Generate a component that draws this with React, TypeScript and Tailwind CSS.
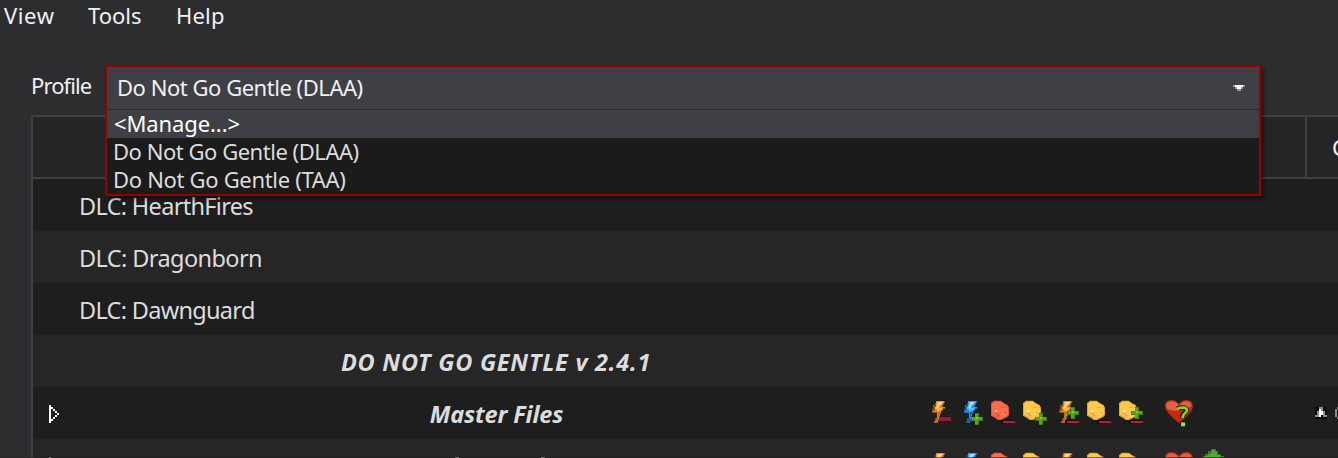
import type { ReactNode } from "react";

const Glyph = ({ w, x, children }: { w: string; x: number; children: ReactNode }) => (
  <svg className={`${w} h-7 shrink-0`} viewBox={`${x} 30 ${w === "w-8" ? 96 : w === "w-7" ? 84 : w === "w-9" ? 108 : 138} 84`}>
    {children}
  </svg>
);

const Bolt = ({ x, blue }: { x: number; blue?: boolean }) => (
  <g transform={`translate(${x} 0)`}>
    <path d="M12 33h27v6h-3v6h-3v6h6v6h-6v6h-6v9h-3v9h-3v12h-3v6H6v-6h3v-9h6V69H0V57h3V45h6V39h3z" fill={blue ? "#1668aa" : "#8b5215"} />
    <path d="M12 33h24v6h-3v6h-3v6h9v3h-6v6h-6v9h-3v9h-3v9h-3v9h-6v-6h3V66H3v-3h6V51h3z" fill={blue ? "#299ae4" : "#dd8d25"} />
    <path d="M15 36h15v6h-6v6h-3v6h9v6h-6v3h-9V57H9v-6h3z" fill={blue ? "#64c0f7" : "#fbb442"} />
    <path d="M21 36h12v3h-6v6h-6v9h-6v-6h3v-9h3z" fill={blue ? "#a9def9" : "#ffdc94"} />
    <path d="M18 66h6v6h-3v9h-3v12h-3v6H6v-6h6v-9h6z" fill={blue ? "#0d5ba0" : "#b86d14"} />
  </g>
);

const Blob = ({ x, red }: { x: number; red?: boolean }) => (
  <g transform={`translate(${x} 0)`}>
    <path d="M0 39L9 32h20l11 8 10 5 4 8v22l-5 6-11 5-8 4H20l-7-5-13-8z" fill={red ? "#e2573b" : "#e0a53e"} />
    <path d="M3 42l8-7h18l11 8 9 6 2 8v17l-11 8-10 4h-8l-7-7-12-5z" fill={red ? "#f96c4d" : "#fcc94d"} />
    <path d="M12 66l8 4 8 8-6 3-6-6-7-4zM30 51h12v3H30zM39 66h9v3h-9z" fill={red ? "#e0563f" : "#e8ac43"} />
    <path d="M12 60h6v6h-6z" fill={red ? "#ffc0a4" : "#ffe8ad"} />
    <path d="M33 69h6v6h-6z" fill={red ? "#f68b68" : "#ffdc73"} />
  </g>
);

const Plus = ({ x, y }: { x: number; y: number }) => (
  <g transform={`translate(${x} ${y})`}>
    <path d="M12 0h12v12h12v12H24v12H12V24H0V12h12z" fill="#397d14" />
    <path d="M12 3h9v9h12v9H21v12h-9V21H3v-9h9z" fill="#5ca41b" />
    <path d="M15 12h6v6h-6z" fill="#84c92c" />
  </g>
);

const Minus = ({ x, y = 93 }: { x: number; y?: number }) => (
  <g>
    <path d={`M${x - 6} ${y - 3}h42v12h-42z`} fill="#160b0d" />
    <path d={`M${x} ${y}h36v6h-36z`} fill="#bd193f" />
  </g>
);

const Heart = () => (
  <g>
    <path d="M387 100C374 88 346 68 345 49c0-13 8-19 19-19 11 0 19 5 23 12 4-7 12-12 22-12 12 0 20 6 20 18 0 21-28 38-42 52z" fill="#a52c1a" />
    <path d="M387 95C375 84 350 67 349 50c0-11 6-16 15-16 11 0 18 5 23 13 5-8 12-13 22-13 10 0 16 5 16 15 0 17-26 35-38 46z" fill="#cb2710" />
    <path d="M351 57c-7-14 0-23 13-23 11 0 18 5 23 13 5-8 12-13 22-13 10 0 16 5 16 15-14 6-24 12-40 13-13 1-23-1-34-5z" fill="#df6045" />
    <path d="M383 56c6-5 26-4 27 4 1 9-13 7-13 23M393 101h12" fill="none" stroke="#141d08" strokeWidth="15" />
    <path d="M382 57c6-6 29-6 29 3 0 11-13 7-13 24" fill="none" stroke="#8bd51b" strokeWidth="8" />
    <path d="M393 97h12v12h-12z" fill="#9bdd29" />
  </g>
);

const Flags = ({ arrow }: { arrow?: boolean }) => (
  <div className="flex shrink-0 pt-[13px]">
    <Glyph w="w-8" x={30}><Bolt x={36} /><path d="M57 81h36v12H57z" fill="#951b37" /></Glyph>
    <Glyph w="w-7" x={126}><Bolt x={132} blue /><Plus x={153} y={69} /></Glyph>
    <Glyph w="w-8" x={210}><Blob x={213} red /><Minus x={249} /></Glyph>
    <Glyph w="w-9" x={306}><Blob x={309} /><Plus x={345} y={69} /></Glyph>
    <Glyph w="w-7" x={24}><Bolt x={28} /><Plus x={51} y={51} /><Minus x={51} /></Glyph>
    <Glyph w="w-8" x={108}><Blob x={111} /><Minus x={147} /></Glyph>
    <Glyph w="w-[46px]" x={204}><Blob x={207} /><Plus x={243} y={51} /><Minus x={243} /></Glyph>
    <Glyph w="w-9" x={342}><Heart /></Glyph>
    {arrow && (
      <svg className="-mt-1 h-7 w-6" viewBox="0 0 72 84">
        <path d="M33 3h15v6h6v9h9v6h9v9H9v-9h6v-6h9V9h9z" fill="#397f20" />
        <path d="M36 6h9v6h6v9h9v9H15v-6h9v-6h9z" fill="#52a733" />
      </svg>
    )}
  </div>
);

const Expander = () => (
  <svg className="mt-px ml-4 h-[18px] w-[11px] shrink-0" viewBox="0 0 11 18" shapeRendering="crispEdges">
    <path d="M0 0h2v2h2v2h2v2h2v2h2v2H8v2H6v2H4v2H2v2H0zM2 4v10h2v-2h2v-2h2V8H6V6H4V4z" fill="#fff" fillRule="evenodd" />
  </svg>
);

const dlc = [
  ["DLC: HearthFires", "tracking-[-0.68px]"],
  ["DLC: Dragonborn", "tracking-[-0.6px]"],
  ["DLC: Dawnguard", "tracking-[-0.7px]"],
];

export default function App() {
  return (
    <div className="relative flex h-[458px] w-[1338px] flex-col overflow-hidden bg-[#2d2d30] font-['Noto_Sans','Open_Sans',sans-serif] text-[22px] text-[#f1f1f1]">
      <nav className="flex h-[66px] pl-1 leading-[30px]">
        <span className="w-[84px] tracking-[0.6px]">View</span>
        <span className="w-[88px]">Tools</span>
        <span className="tracking-[0.2px]">Help</span>
      </nav>
      <div className="flex h-[49px] pl-[31px]">
        <label className="w-[75px] pt-[3px] leading-8 tracking-[-0.9px]">Profile</label>
        <div className="relative z-10 -mt-px -ml-px h-[131px] w-[1156px] border-2 border-[#990000] bg-[#1b1b1c] shadow-[3px_3px_4px_rgba(0,0,0,0.45)]">
          <div className="flex h-[43px] items-center justify-between border-b border-[#2d2d30] bg-[#3f3f46] pr-[14px] pl-[10px]">
            <span className="-mt-0.5 tracking-[-0.47px]">Do Not Go Gentle (DLAA)</span>
            <svg className="h-1.5 w-3" viewBox="0 0 12 6"><path d="M0 0h12v2h-2v2H8v2H4V4H2V2H0z" fill="#999" /><path d="M2 0h8v2H8v2H4V2H2z" fill="#fff" /></svg>
          </div>
          <div className="h-7 bg-[#3f3f46] pl-[7px] leading-[26px] tracking-[-0.1px] text-white">&lt;Manage...&gt;</div>
          <div className="h-7 pl-1.5 leading-[26px] tracking-[-0.47px] text-[#dcdcdc]">Do Not Go Gentle (DLAA)</div>
          <div className="h-7 pl-1.5 leading-[26px] tracking-[-0.32px] text-[#dcdcdc]">Do Not Go Gentle (TAA)</div>
        </div>
      </div>
      <main className="ml-[31px] w-[1307px] border-t-2 border-l-2 border-[#3f3f46] text-[23.5px] text-[#dcdcdc]">
        <header className="flex h-[62px] overflow-hidden border-b-2 border-[#3f3f46] bg-[#252526]">
          <div className="w-[1274px] shrink-0 border-r-2 border-[#3f3f46]" />
          <div className="shrink-0 pl-[25px] text-[22px] leading-[60px] whitespace-nowrap text-[#f1f1f1]">C</div>
        </header>
        {dlc.map(([name, spacing], i) => (
          <div key={name} className={`h-[52px] pl-[46px] leading-[55px] ${spacing} ${i % 2 ? "bg-[#262626]" : "bg-[#1e1e1e]"}`}>{name}</div>
        ))}
        <div className="h-[52px] bg-[#262626] text-center leading-[54px] font-bold italic"><div className="w-[926px] tracking-[0.74px]">DO NOT GO GENTLE v 2.4.1</div></div>
        <div className="flex h-[52px] bg-[#1e1e1e]">
          <div className="flex w-[897px] shrink-0 items-center">
            <Expander />
            <span className="mt-1 w-[873px] shrink-0 text-center font-bold tracking-[-0.15px] italic">Master Files</span>
          </div>
          <Flags />
          <svg className="mt-5 ml-[115px] h-3 w-6 shrink-0" viewBox="0 0 24 12">
            <path d="M0 0h12v12H0z" fill="#090909" />
            <path d="M4 0h4v4h2v4h2v2H8V8H6v2H0V8h2V4h2z" fill="#909090" />
            <path d="M4 2h2v2h2v4H6v2H4z" fill="#fff" />
            <path d="M20 2h2v8h-2zM22 0h2v2h-2zM22 10h2v2h-2z" fill="#888" />
          </svg>
        </div>
        <div className="flex h-[19px] overflow-hidden bg-[#262626]">
          <div className="flex h-[52px] w-[897px] shrink-0 items-center">
            <Expander />
            <svg className="-mt-3.5 ml-[395px] h-px w-[90px] self-start translate-y-8" viewBox="0 0 90 1">
              <path d="M0 0h4v1H0zM86 0h4v1h-4z" fill="#dcdcdc" />
            </svg>
          </div>
          <Flags arrow />
        </div>
      </main>
      <div className="absolute bottom-0 left-0 h-px w-full bg-[#2b1d22]/60" />
    </div>
  );
}
